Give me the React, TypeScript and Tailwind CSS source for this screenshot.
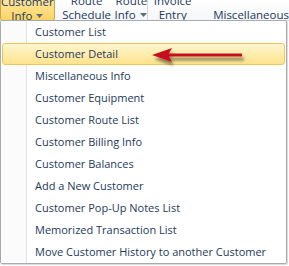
const items = [
  "Customer List",
  "Customer Detail",
  "Miscellaneous Info",
  "Customer Equipment",
  "Customer Route List",
  "Customer Billing Info",
  "Customer Balances",
  "Add a New Customer",
  "Customer Pop-Up Notes List",
  "Memorized Transaction List",
  "Move Customer History to another Customer",
];

function Caret() {
  return (
    <svg width="7" height="4" viewBox="0 0 7 4" className="ml-[4px] inline-block">
      <path d="M0 0 H7 L3.5 4 Z" fill="#5c6b7e" />
    </svg>
  );
}

// callout arrow drawn over the menu
function RedArrow() {
  return (
    <svg
      width="110"
      height="26"
      viewBox="0 0 110 26"
      className="pointer-events-none absolute left-[148px] top-[45px]"
    >
      <defs>
        <filter id="arrowShadow" x="-10%" y="-50%" width="130%" height="200%">
          <feGaussianBlur in="SourceAlpha" stdDeviation="1.6" />
          <feOffset dx="2" dy="4" />
          <feComponentTransfer>
            <feFuncA type="linear" slope="0.45" />
          </feComponentTransfer>
          <feMerge>
            <feMergeNode />
            <feMergeNode in="SourceGraphic" />
          </feMerge>
        </filter>
      </defs>
      <g filter="url(#arrowShadow)">
        <path d="M4 10 L24 3 L21 8.5 L94 8.5 L94 11.5 L21 11.5 L24 17 Z" fill="#c8101a" />
      </g>
    </svg>
  );
}

export default function App() {
  return (
    <div className="relative h-[266px] w-[289px] overflow-hidden bg-white font-['Open_Sans',sans-serif] text-[#1e395b]">
      {/* ribbon strip */}
      <div className="flex h-[21px] items-start border-b border-[#d5d9de] bg-gradient-to-b from-[#ffffff] to-[#f4f6f8] text-[11.5px] leading-[14px]">
        <div className="-mt-[6px] flex h-[27px] w-[55px] flex-col items-center rounded-b-[3px] border border-[#c9a84c] bg-gradient-to-b from-[#fdeaa8] to-[#fbd462]">
          <span>Customer</span>
          <span className="flex items-center">
            Info
            <Caret />
          </span>
        </div>
        <div className="-mt-[6px] flex h-[27px] w-[104px] border-r border-[#d5d9de]">
          <div className="flex w-[60px] flex-col items-center pl-[4px]">
            <span>Route</span>
            <span>Schedule</span>
          </div>
          <div className="flex flex-1 flex-col items-start">
            <span className="pl-[1px]">Route</span>
            <span className="flex items-center">
              Info
              <Caret />
            </span>
          </div>
        </div>
        <div className="-mt-[6px] flex w-[52px] flex-col items-center pl-[2px]">
          <span>Invoice</span>
          <span>Entry</span>
        </div>
        <div className="-mt-[6px] flex flex-col pl-[18px]">
          <span>&nbsp;</span>
          <span className="whitespace-nowrap">Miscellaneous</span>
        </div>
      </div>

      {/* dropdown menu */}
      <div className="relative -mt-[1px] h-[244px] w-[287px] rounded-[2px] border border-[#a7abb0] bg-white px-[1px] shadow-[1px_1px_1px_rgba(0,0,0,0.15)]">
        <div className="absolute bottom-0 left-0 top-0 w-[26px] border-r border-[#e2e3e3] bg-[#fbfbfb]" />
        <ul className="relative flex flex-col text-[11px]">
          {items.map((label, i) => (
            <li
              key={label}
              className={
                i === 1
                  ? "flex h-[22px] items-center whitespace-nowrap rounded-[3px] border border-[#eec75a] bg-gradient-to-b from-[#fff6d0] to-[#fde38c] pl-[32px]"
                  : "flex h-[22px] items-center whitespace-nowrap border border-transparent pl-[32px]"
              }
            >
              {label}
            </li>
          ))}
        </ul>
      </div>

      <RedArrow />
    </div>
  );
}
